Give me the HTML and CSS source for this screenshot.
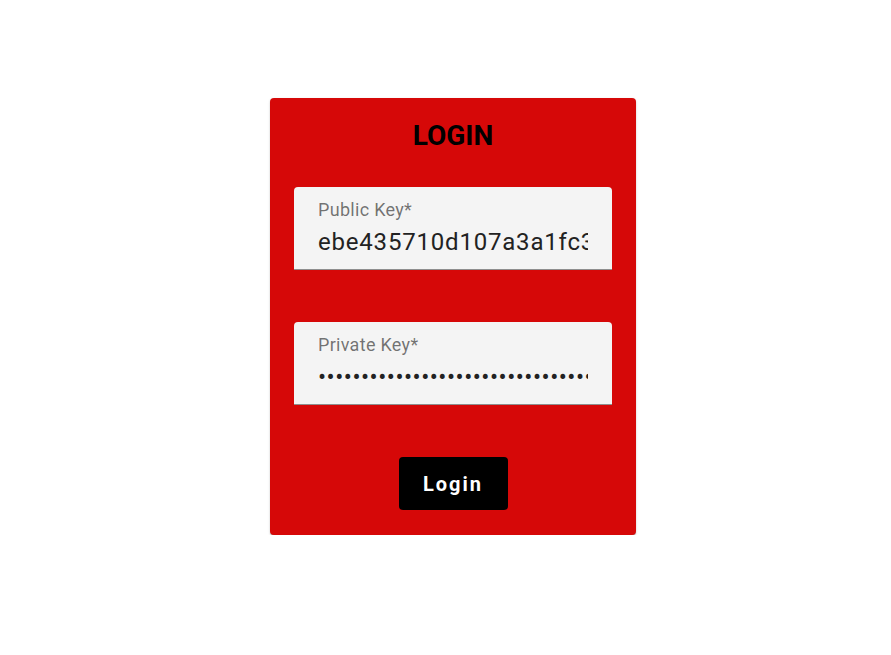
FILE: index.html
```html
<!DOCTYPE html>
<html>
<head>
<meta charset="utf-8">
<link rel="stylesheet" href="styles.css">
</head>
<body>
<div class="page">
  <form class="card">
    <h1 class="title">LOGIN</h1>
    <div class="fields">
      <label class="field">
        <span class="label">Public Key*</span>
        <input class="input input-text" type="text" value="ebe435710d107a3a1fc3a9b2c4" readonly>
      </label>
      <label class="field">
        <span class="label">Private Key*</span>
        <input class="input" type="password" value="abcdefghijklmnopqrstuvwxyzabcdefghij" readonly>
      </label>
    </div>
    <div class="actions">
      <button class="btn" type="button">Login</button>
    </div>
  </form>
</div>
</body>
</html>
```
FILE: styles.css
```css
* { box-sizing: border-box; }
html, body { margin: 0; padding: 0; background: #fff; }
body { font-family: Roboto, "Liberation Sans", sans-serif; }
.page {
  display: flex;
  justify-content: center;
  padding-top: 98px;
  padding-left: 15px;
}
.card {
  width: 366px;
  background: #d60808;
  border-radius: 4px;
  padding: 21px 24px 25px;
  box-shadow: 0 2px 2px -1px rgba(0,0,0,0.25), 0 1px 1px 0 rgba(0,0,0,0.14), 0 1px 3px 0 rgba(0,0,0,0.12);
  display: flex;
  flex-direction: column;
}
.title {
  margin: 0;
  text-align: center;
  font-size: 28px;
  font-weight: 700;
  line-height: normal;
  color: #000;
}
.fields {
  margin-top: 35px;
  display: flex;
  flex-direction: column;
  gap: 52px;
}
.field {
  display: flex;
  flex-direction: column;
  height: 83px;
  padding: 12px 24px 0;
  background: #f4f4f4;
  border-radius: 4px 4px 0 0;
  border-bottom: 1px solid rgba(0,0,0,0.42);
}
.label {
  font-size: 18px;
  line-height: 21px;
  color: rgba(0,0,0,0.55);
  letter-spacing: 0.3px;
}
.input {
  margin-top: 8px;
  height: 28px;
  width: 100%;
  padding: 0;
  border: 0;
  outline: none;
  background: transparent;
  font-family: Roboto, "Liberation Sans", sans-serif;
  font-size: 24px;
  letter-spacing: 0.5px;
  color: #222;
}
.input-text {
  letter-spacing: 0.8px;
}
.actions {
  margin-top: 52px;
  display: flex;
  justify-content: center;
}
.btn {
  width: 109px;
  height: 53px;
  border: 0;
  border-radius: 4px;
  background: #000;
  color: #fff;
  font-family: Roboto, "Liberation Sans", sans-serif;
  font-size: 20px;
  font-weight: 700;
  letter-spacing: 2px;
  cursor: pointer;
}
```
